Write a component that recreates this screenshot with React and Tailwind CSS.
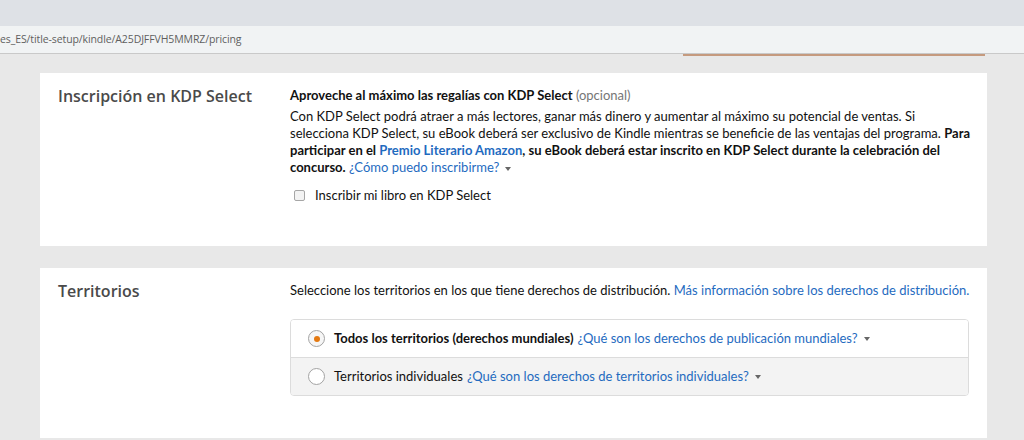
import React from "react";

const font = { fontFamily: 'Lato, "Open Sans", Arial, sans-serif' };
const titleFont = { fontFamily: '"Open Sans", "Noto Sans", Arial, sans-serif' };

function Caret() {
  return (
    <span className="ml-[6px] inline-block h-0 w-0 border-x-[3.5px] border-t-[4px] border-x-transparent border-t-[#666] align-middle" />
  );
}

function Section({ title, children, className }) {
  return (
    <section className={"flex bg-white " + className}>
      <div className="w-[250px] shrink-0 pl-[18px] pt-[12px]">
        <h2 className="text-[16px] leading-[22px] font-semibold text-[#4a4a4a]" style={titleFont}>
          {title}
        </h2>
      </div>
      <div className="flex-1 pr-[18px] pt-[14px]">{children}</div>
    </section>
  );
}

export default function App() {
  return (
    <div className="h-[440px] w-[1024px] overflow-hidden bg-[#e8e8e8] text-[#111]" style={font}>
      {/* browser chrome */}
      <div className="h-[26px] bg-[#dee1e6]" />
      <div className="flex h-[28px] items-center border-b border-[#c9c9c9] bg-[#f1f3f4] text-[10.5px] tracking-[-0.1px] text-[#5f5f5f]" style={titleFont}>
        es_ES/title-setup/kindle/A25DJFFVH5MMRZ/pricing
      </div>
      <div className="ml-[683px] h-[2px] w-[302px] bg-[#c59a7e]" />

      <div className="flex w-[987px] flex-col gap-[22px] pl-[40px] pt-[17px]">
        <Section title="Inscripción en KDP Select" className="h-[173px]">
          <p className="whitespace-nowrap text-[13px] leading-[17px]">
            <b className="font-bold">Aproveche al máximo las regalías con KDP Select</b>{" "}
            <span className="text-[#767676]">(opcional)</span>
          </p>
          <p className="mt-[4px] whitespace-nowrap text-[13px] leading-[17px]">
            Con KDP Select podrá atraer a más lectores, ganar más dinero y aumentar al máximo su potencial de ventas. Si
            <br />
            selecciona KDP Select, su eBook deberá ser exclusivo de Kindle mientras se beneficie de las ventajas del programa.{" "}
            <b className="font-bold">Para</b>
            <br />
            <b className="font-bold">
              participar en el <a className="text-[#1f6bbf]">Premio Literario Amazon</a>, su eBook deberá estar inscrito en KDP Select durante la celebración del
            </b>
            <br />
            <b className="font-bold">concurso.</b> <a className="text-[#1f6bbf]">¿Cómo puedo inscribirme?</a>
            <Caret />
          </p>
          <label className="mt-[11px] flex items-center gap-[10px] pl-[4px] text-[13px] leading-[17px]">
            <span className="h-[11px] w-[11px] rounded-[2px] border border-[#a6a6a6] bg-[#f3f3f3]" />
            Inscribir mi libro en KDP Select
          </label>
        </Section>

        <Section title="Territorios" className="h-[170px]">
          <p className="whitespace-nowrap text-[13px] leading-[17px]">
            Seleccione los territorios en los que tiene derechos de distribución.{" "}
            <a className="text-[#1f6bbf]">Más información sobre los derechos de distribución.</a>
          </p>
          <div className="mt-[20px] w-[679px] overflow-hidden rounded-[4px] border border-[#dcdcdc] text-[13px] leading-[17px]">
            <div className="flex h-[38px] items-center border-b border-[#dcdcdc] bg-white pl-[17px]">
              <span className="mr-[9px] flex h-[17px] w-[17px] items-center justify-center rounded-full border border-[#a3a3a3] bg-[#f6f6f6]">
                <span className="h-[6px] w-[6px] rounded-full bg-[#e47911]" />
              </span>
              <b className="font-bold">Todos los territorios (derechos mundiales)</b>
              <a className="ml-[4px] text-[#1f6bbf]">¿Qué son los derechos de publicación mundiales?</a>
              <Caret />
            </div>
            <div className="flex h-[37px] items-center bg-[#f3f3f3] pl-[17px]">
              <span className="mr-[9px] h-[17px] w-[17px] rounded-full border border-[#a3a3a3] bg-white" />
              Territorios individuales
              <a className="ml-[4px] text-[#1f6bbf]">¿Qué son los derechos de territorios individuales?</a>
              <Caret />
            </div>
          </div>
        </Section>
      </div>
    </div>
  );
}
